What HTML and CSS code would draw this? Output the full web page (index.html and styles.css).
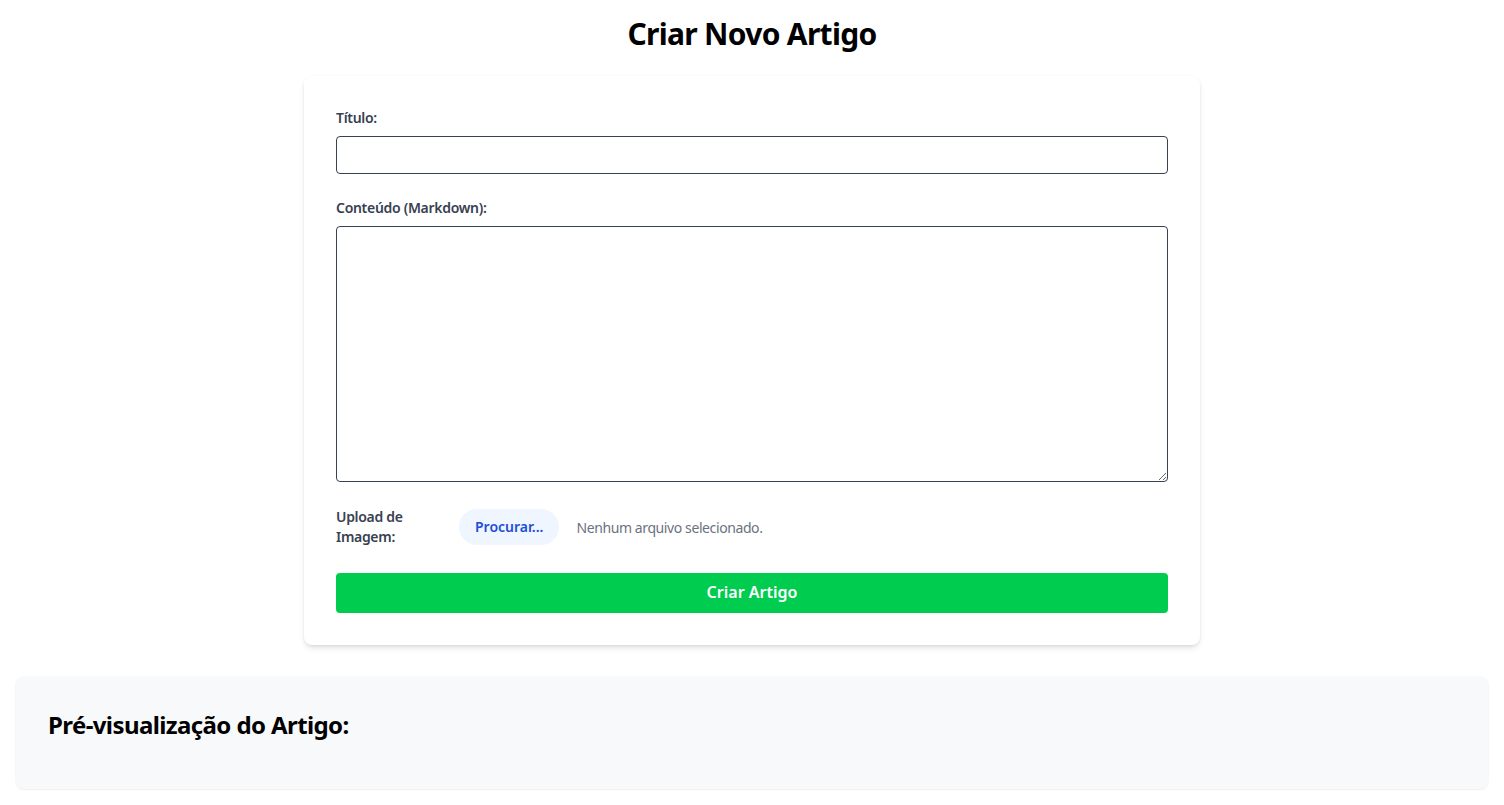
FILE: index.html
```html
<!DOCTYPE html>
<html lang="pt">
<head>
<meta charset="utf-8">
<title>Criar Novo Artigo</title>
<link rel="stylesheet" href="styles.css">
</head>
<body>
<div class="page">
  <h1 class="page-title">Criar Novo Artigo</h1>
  <form class="card">
    <div class="field">
      <label class="label" for="titulo">Título:</label>
      <input class="input" id="titulo" type="text">
    </div>
    <div class="field">
      <label class="label" for="conteudo">Conteúdo (Markdown):</label>
      <textarea class="textarea" id="conteudo"></textarea>
    </div>
    <div class="upload-row">
      <label class="label upload-label">Upload de Imagem:</label>
      <div class="file">
        <span class="file-btn">Procurar...</span>
        <span class="file-text">Nenhum arquivo selecionado.</span>
      </div>
    </div>
    <button type="button" class="submit">Criar Artigo</button>
  </form>
  <section class="preview">
    <h2 class="preview-title">Pré-visualização do Artigo:</h2>
  </section>
</div>
</body>
</html>
```
FILE: styles.css
```css
* { box-sizing: border-box; }
html, body { margin: 0; padding: 0; background: #fff; }
body {
  font-family: "Noto Sans", "Open Sans", sans-serif;
  color: #111;
}
.page {
  padding: 16px;
}
.page-title {
  margin: 0 0 24px;
  text-align: center;
  font-size: 30px;
  line-height: 36px;
  font-weight: 700;
  letter-spacing: -0.7px;
  color: #000;
}
.card {
  width: 896px;
  margin: 0 auto;
  background: #fff;
  border-radius: 8px;
  padding: 32px;
  box-shadow: 0 4px 6px -1px rgba(0,0,0,0.1), 0 2px 4px -2px rgba(0,0,0,0.1), 0 0 3px rgba(0,0,0,0.04);
}
.field { margin-bottom: 24px; }
.label {
  display: block;
  font-size: 14px;
  line-height: 20px;
  font-weight: 600;
  letter-spacing: -0.3px;
  color: #374151;
  margin-bottom: 8px;
}
.input, .textarea {
  display: block;
  width: 100%;
  border: 1px solid #374151;
  border-radius: 4px;
  font: inherit;
  background: #fff;
  outline: none;
}
.input { height: 38px; }
.textarea { height: 256px; resize: vertical; }
.upload-row {
  display: flex;
  align-items: center;
  margin-bottom: 25px;
  height: 42px;
}
.upload-label {
  width: 107px;
  margin: 0 16px 0 0;
  flex-shrink: 0;
}
.file {
  display: flex;
  align-items: center;
}
.file-btn {
  display: inline-block;
  height: 36px;
  line-height: 36px;
  padding: 0 16px;
  border-radius: 9999px;
  background: #eff6ff;
  color: #1d4ed8;
  font-size: 14px;
  font-weight: 600;
}
.file-text {
  margin-left: 17px;
  font-size: 14px;
  letter-spacing: -0.4px;
  color: #6b7280;
}
.submit {
  display: block;
  width: 100%;
  height: 40px;
  border: 0;
  border-radius: 4px;
  background: #00cc50;
  color: #fff;
  font-family: inherit;
  font-size: 16px;
  font-weight: 600;
  padding: 0 0 2px;
}
.preview {
  margin-top: 32px;
  background: #f8f9fb;
  border-radius: 8px;
  padding: 32px;
  box-shadow: 0 0 0 1px rgba(0,0,0,0.02), 0 1px 2px rgba(0,0,0,0.05);
}
.preview-title {
  margin: 0 0 16px;
  font-size: 24px;
  line-height: 32px;
  font-weight: 700;
  letter-spacing: -0.6px;
  color: #000;
}
```
